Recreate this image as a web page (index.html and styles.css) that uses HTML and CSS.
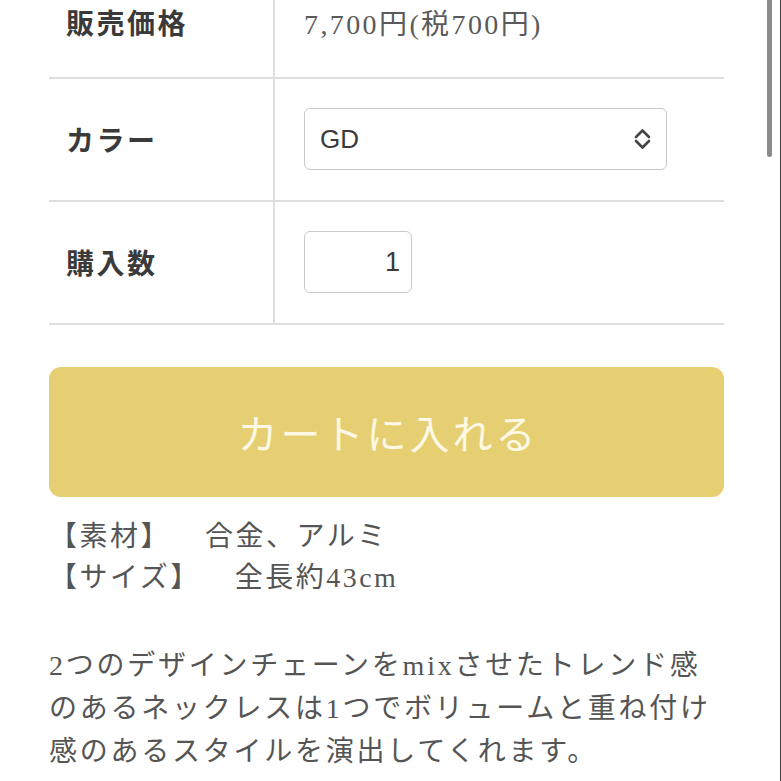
FILE: index.html
```html
<!DOCTYPE html>
<html lang="ja">
<head>
<meta charset="utf-8">
<title>商品詳細</title>
<link rel="stylesheet" href="styles.css">
</head>
<body>
<main class="page">
  <section class="spec-table">
    <div class="row row-first">
      <div class="label">販売価格</div>
      <div class="value price">7,700円(税700円)</div>
    </div>
    <div class="row">
      <div class="label">カラー</div>
      <div class="value">
        <div class="select">
          <span class="select-text">GD</span>
          <svg class="chevron" width="19" height="22" viewBox="0 0 19 22" aria-hidden="true">
            <path d="M3 9 L9.5 2.5 L16 9" fill="none" stroke="#444" stroke-width="2.6" stroke-linecap="round" stroke-linejoin="round"/>
            <path d="M3 13 L9.5 19.5 L16 13" fill="none" stroke="#444" stroke-width="2.6" stroke-linecap="round" stroke-linejoin="round"/>
          </svg>
        </div>
      </div>
    </div>
    <div class="row">
      <div class="label">購入数</div>
      <div class="value">
        <input class="qty" type="text" value="1">
      </div>
    </div>
  </section>

  <button class="cart-btn" type="button">カートに入れる</button>

  <div class="specs">
    <div class="spec-line"><span class="spec-key">【素材】</span>合金、アルミ</div>
    <div class="spec-line"><span class="spec-key">【サイズ】</span>全長約43cm</div>
  </div>

  <p class="desc">2つのデザインチェーンをmixさせたトレンド感<br>のあるネックレスは1つでボリュームと重ね付け<br>感のあるスタイルを演出してくれます。</p>
</main>
<div class="scroll-thumb"></div>
<div class="edge-line"></div>
</body>
</html>
```

FILE: styles.css
```css
html, body {
  margin: 0;
  padding: 0;
  background: #ffffff;
  overflow: hidden;
}

body {
  font-family: "Liberation Serif", "Noto Sans CJK JP", serif;
  color: #555555;
}

.page {
  width: 675px;
  margin: -26px 0 0 49px;
}

.row {
  display: grid;
  grid-template-columns: 226px 1fr;
  border-bottom: 2px solid #dedede;
}

.label {
  display: flex;
  align-items: center;
  padding: 29px 0 30px 17px;
  border-right: 2px solid #dedede;
  font-family: "Noto Sans CJK JP", sans-serif;
  font-weight: 700;
  font-size: 28px;
  letter-spacing: 2.5px;
  line-height: 44px;
  color: #3a3a3a;
}

.row-first .label {
  padding-top: 26px;
  padding-bottom: 33px;
}

.value {
  display: flex;
  align-items: center;
  padding: 29px 0 30px 29px;
}

.price {
  font-size: 28px;
  letter-spacing: 2.4px;
  line-height: 44px;
  color: #5a5a5a;
}

.select {
  box-sizing: border-box;
  width: 363px;
  height: 62px;
  border: 1.5px solid #c9c9c9;
  border-radius: 6px;
  display: flex;
  align-items: center;
  justify-content: space-between;
  padding: 0 14px 0 15px;
  background: #fff;
}

.select-text {
  font-family: "Liberation Sans", Arial, sans-serif;
  font-size: 26px;
  color: #3a3a3a;
}

.chevron {
  display: block;
}

.qty {
  box-sizing: border-box;
  width: 108px;
  height: 62px;
  border: 1.5px solid #c9c9c9;
  border-radius: 6px;
  padding: 0 11px 0 0;
  margin: 0;
  text-align: right;
  font-family: "Liberation Sans", Arial, sans-serif;
  font-size: 27px;
  color: #3a3a3a;
  background: #fff;
  outline: none;
}

.cart-btn {
  display: block;
  box-sizing: border-box;
  width: 675px;
  height: 130px;
  margin: 42px 0 0 0;
  border: none;
  border-radius: 12px;
  background: #e6cf73;
  color: #fdf9e4;
  font-family: "Noto Sans CJK JP", sans-serif;
  font-size: 40px;
  letter-spacing: 3px;
  padding: 0 0 0 3px;
}

.specs {
  margin-top: 19px;
  font-size: 28px;
  letter-spacing: 2.5px;
  line-height: 41px;
}

.spec-key {
  margin-right: 34px;
}

.desc {
  margin: 46px 0 0 0;
  font-size: 28px;
  letter-spacing: 2.75px;
  line-height: 43px;
}

.scroll-thumb {
  position: fixed;
  top: 0;
  right: 9px;
  width: 5px;
  height: 157px;
  background: #8b8b8b;
  border-radius: 0 0 3px 3px;
}

.edge-line {
  position: fixed;
  top: 0;
  right: 0;
  width: 1px;
  height: 100%;
  background: #3a3a3a;
}
```
